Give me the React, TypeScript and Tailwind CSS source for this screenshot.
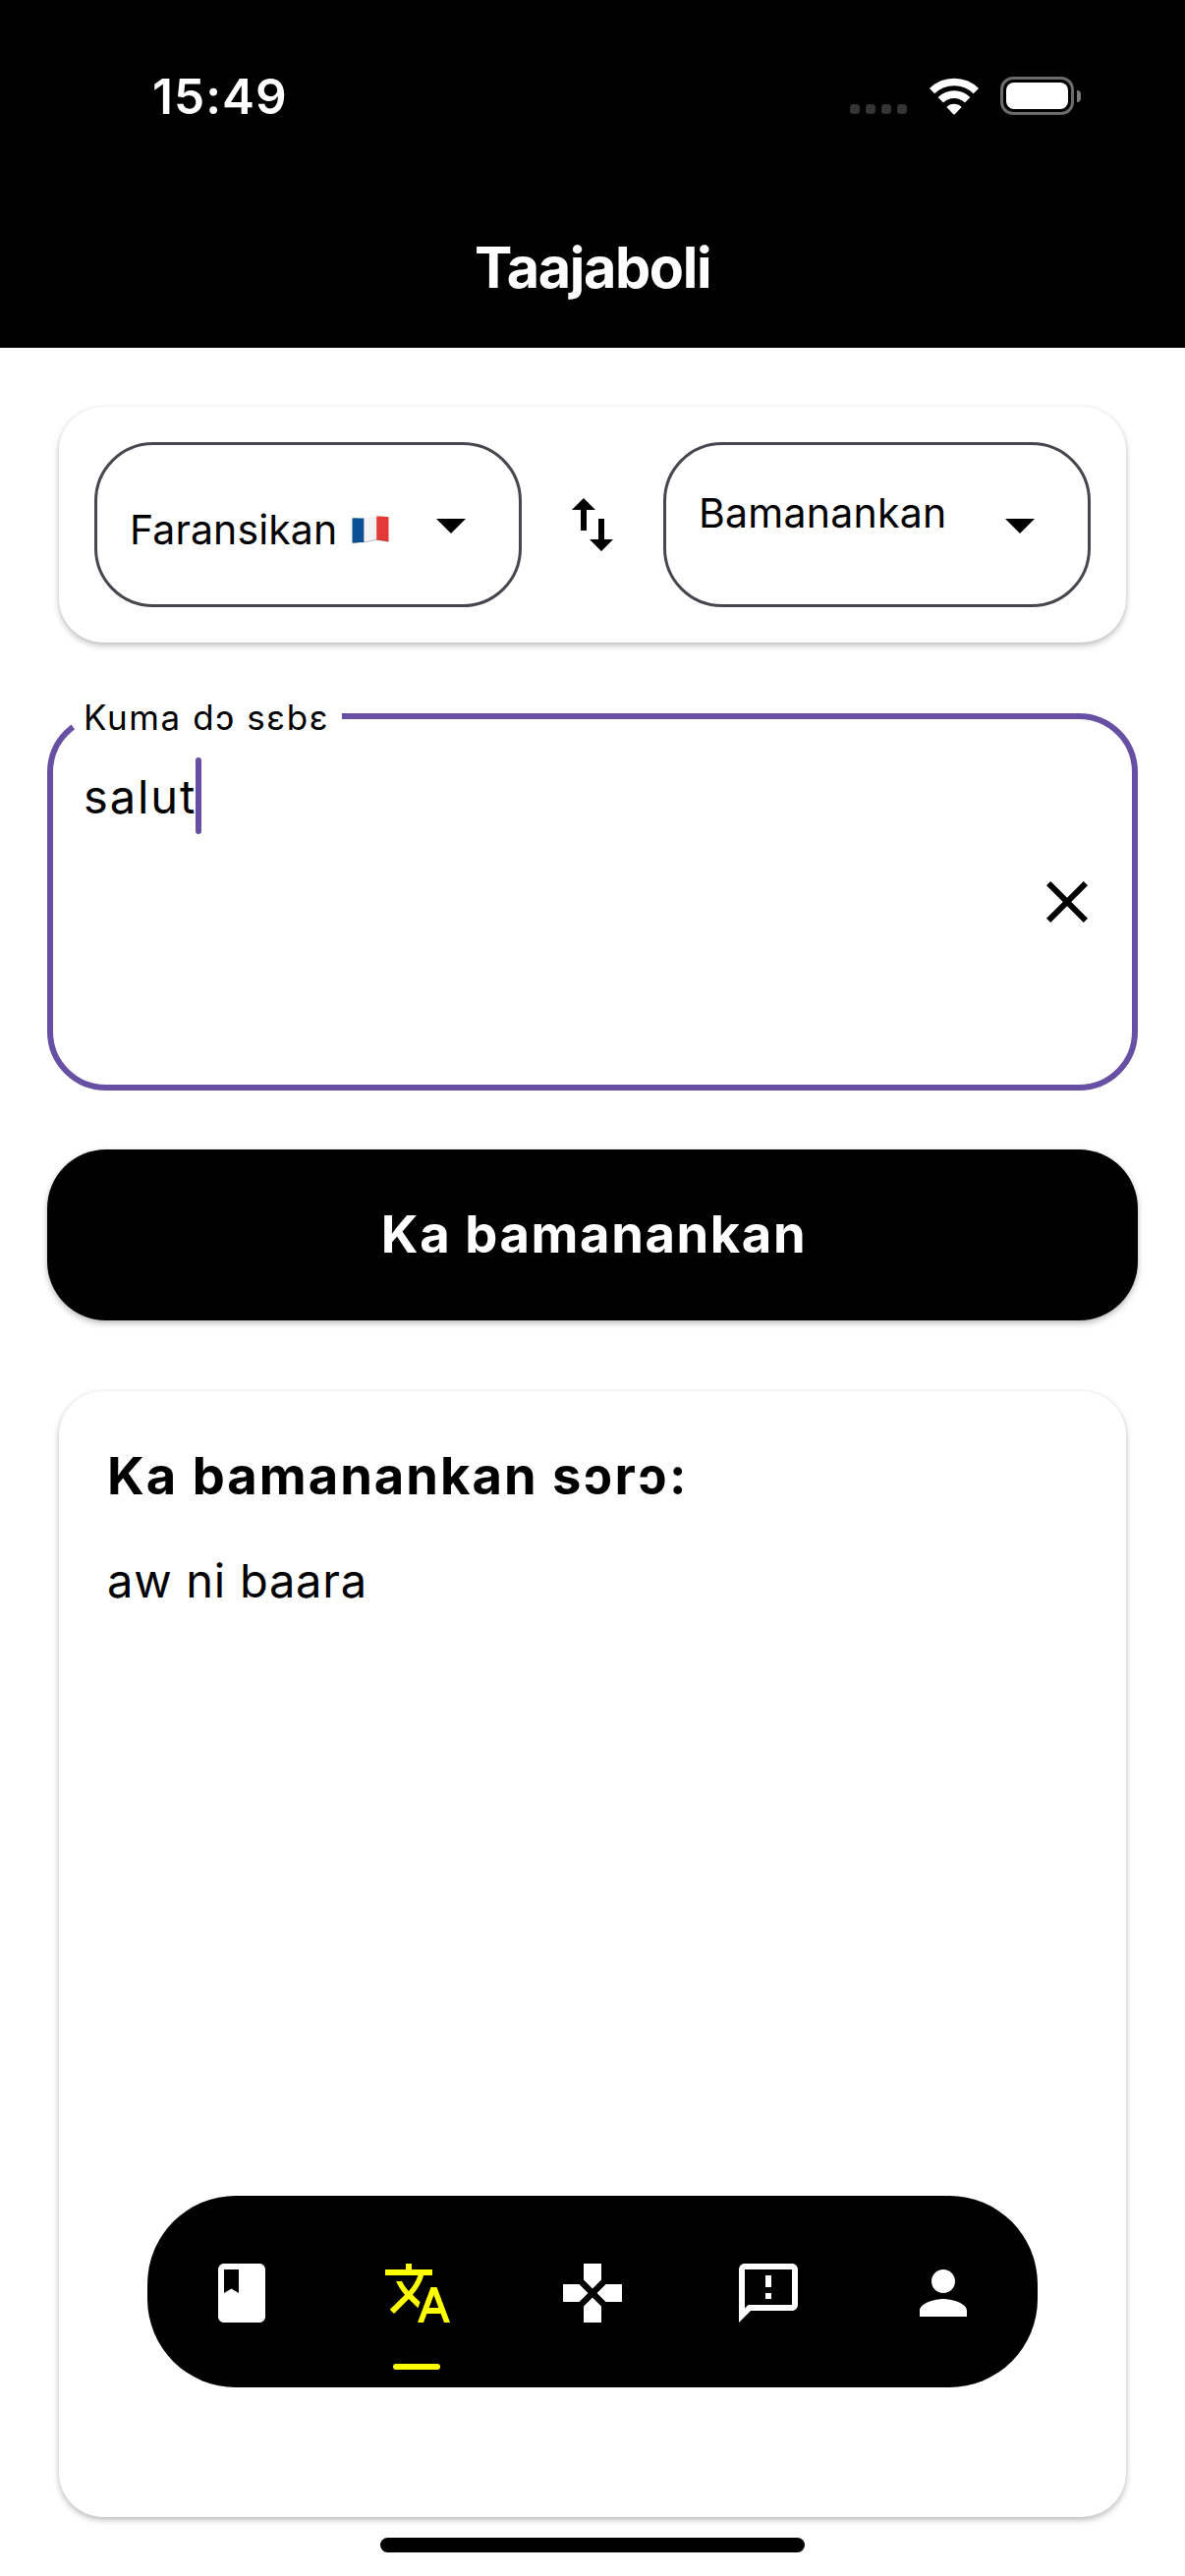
import type { ReactNode } from 'react';

function Icon({ d, className }: { d: string; className?: string }) {
  return (
    <svg viewBox="0 0 24 24" fill="currentColor" className={`size-[72px] shrink-0 ${className ?? ''}`} aria-hidden="true">
      <path d={d} />
    </svg>
  );
}

const icons = {
  dropDown: 'M7 10l5 5 5-5z',
  swap: 'M16 17.01V10h-2v7.01h-3L15 21l4-3.99h-3zM9 3L5 6.99h3V14h2V6.99h3L9 3z',
  close: 'M19 6.41L17.59 5 12 10.59 6.41 5 5 6.41 10.59 12 5 17.59 6.41 19 12 13.41 17.59 19 19 17.59 13.41 12z',
  book: 'M18 2H6c-1.1 0-2 .9-2 2v16c0 1.1.9 2 2 2h12c1.1 0 2-.9 2-2V4c0-1.1-.9-2-2-2zM6 4h5v8l-2.5-1.5L6 12V4z',
  translate:
    'M12.87 15.07l-2.54-2.51.03-.03c1.74-1.94 2.98-4.17 3.71-6.53H17V4h-7V2H8v2H1v1.99h11.17C11.5 7.92 10.44 9.75 9 11.35 8.07 10.32 7.3 9.19 6.69 8h-2c.73 1.63 1.73 3.17 2.98 4.56l-5.09 5.02L4 19l5-5 3.11 3.11.76-2.04zM18.5 10h-2L12 22h2l1.12-3h4.75L21 22h2l-4.5-12zm-2.62 7l1.62-4.33L19.12 17h-3.24z',
  gamepad: 'M15 7.5V2H9v5.5l3 3 3-3zM7.5 9H2v6h5.5l3-3-3-3zM9 16.5V22h6v-5.5l-3-3-3 3zM16.5 9l-3 3 3 3H22V9h-5.5z',
  feedback:
    'M20 2H4c-1.1 0-1.99.9-1.99 2L2 22l4-4h14c1.1 0 2-.9 2-2V4c0-1.1-.9-2-2-2zm0 14H5.17l-.59.59-.58.58V4h16v12zm-9-4h2v2h-2zm0-6h2v4h-2z',
  person: 'M12 12c2.21 0 4-1.79 4-4s-1.79-4-4-4-4 1.79-4 4 1.79 4 4 4zm0 2c-2.67 0-8 1.34-8 4v2h16v-2c0-2.66-5.33-4-8-4z',
};

function StatusBar() {
  return (
    <div className="flex h-[196px] items-center justify-between pr-[106px] pl-[155px]">
      <span className="text-[49.5px] leading-[60px] font-semibold tracking-[1.05px]">15:49</span>
      <div className="flex items-center">
        <div className="mt-[26px] mr-[22px] flex gap-1.5">
          {[0, 1, 2, 3].map((i) => (
            <i key={i} className="size-2.5 rounded-[3.5px] bg-[#343434]" />
          ))}
        </div>
        <svg viewBox="0 0 52 38" className="mr-[21px] -mt-px h-[38px] w-[52px]" fill="none" aria-hidden="true">
          <path d="M3.6 13.6A32 32 0 0 1 48.4 13.6" stroke="#fff" strokeWidth="7.6" />
          <path d="M12.3 22.8A19.3 19.3 0 0 1 39.7 22.8" stroke="#fff" strokeWidth="7.6" />
          <path d="M18.4 29.9A10.8 10.8 0 0 1 33.6 29.9L26.8 37.2Q26 38 25.2 37.2Z" fill="#fff" />
        </svg>
        <div className="-mt-px flex h-[39px] w-[75px] rounded-[13px] border-[3px] border-[#6b6b6b] p-[3px]">
          <div className="flex-1 rounded-[8px] bg-white" />
        </div>
        <div className="ml-[3px] h-3 w-1 rounded-r-full bg-[#7b7b7b]" />
      </div>
    </div>
  );
}

function Select({ className, children }: { className: string; children: ReactNode }) {
  return (
    <button className={`flex h-[168px] w-[435px] items-center justify-between rounded-[60px] border-[3px] border-[#49454f] px-[33px] text-[41px] leading-[50px] ${className}`}>
      {children}
      <Icon d={icons.dropDown} />
    </button>
  );
}

function FrenchFlag() {
  return (
    <svg viewBox="0 0 38 28" className="ml-[15px] h-7 w-[38px]" aria-hidden="true">
      <path d="M.5 2.6C4 1.6 8 2.6 12.6 2.6V27C8 26.6 4 27.8.5 27.6Z" fill="#0b4f94" />
      <path d="M12.6 2.6C17 2.6 21 1 25.2.6V24.6C21 25 17 26.8 12.6 27Z" fill="#f4f4f5" />
      <path d="M25.2.6C29 .2 33.5 1.2 37.5 1.2V26.2C33.5 26.4 29 24.6 25.2 24.6Z" fill="#e23b37" />
      <path d="M.5 27.4C4 27.6 8 26.4 12.6 26.8C17 26.6 21 24.8 25.2 24.4C29 24.4 33.5 26.2 37.5 26" fill="none" stroke="#000" strokeOpacity=".25" />
    </svg>
  );
}

const tabs = [
  { d: icons.book, active: false },
  { d: icons.translate, active: true },
  { d: icons.gamepad, active: false },
  { d: icons.feedback, active: false },
  { d: icons.person, active: false },
];

const raised = 'shadow-[0_3px_6px_rgba(0,0,0,0.26),0_0_4px_rgba(0,0,0,0.04)]';

export default function App() {
  return (
    <div className="flex h-[2622px] w-[1206px] flex-col overflow-hidden bg-white font-['Inter',sans-serif] text-black">
      <header className="h-[354px] bg-black text-white">
        <StatusBar />
        <h1 className="text-center text-[57.5px] leading-[152px] font-bold tracking-[-1.37px]">Taajaboli</h1>
      </header>

      <main className="flex flex-col pt-[60px]">
        <section className={`mx-[60px] flex h-[240px] items-center justify-between rounded-[45px] bg-white px-9 ${raised}`}>
          <Select className="tracking-[0.11px]">
            <span className="flex items-center pt-2.5">
              Faransikan
              <FrenchFlag />
            </span>
          </Select>
          <Icon d={icons.swap} />
          <Select className="tracking-[0.25px]">
            <span className="pb-6">Bamanankan</span>
          </Select>
        </section>

        <section className="relative mx-12 mt-[72px] flex h-[384px] justify-between rounded-[60px] border-[6px] border-[#6750a4]">
          <i className="absolute -top-2 left-2 h-6 w-[286px] bg-white [clip-path:polygon(1px_0,100%_0,100%_100%,18px_100%)]" />
          <span className="absolute -top-[24px] left-[31px] text-[35px] leading-[44px] tracking-[1.6px] whitespace-nowrap">Kuma dɔ sɛbɛ</span>
          <div className="mt-[39px] flex h-[78px] items-center pl-[31px] text-[47px] tracking-[1.9px]">
            <span className="pt-0.5">salut</span>
            <i className="-ml-px h-[78px] w-1.5 rounded-full bg-[#6750a4]" />
          </div>
          <Icon d={icons.close} className="mr-[30px] self-center" />
        </section>

        <button className={`mx-12 mt-[60px] flex h-[174px] items-center justify-center rounded-[60px] bg-black pb-0.5 pl-[3px] text-[52.5px] font-bold tracking-[1.6px] text-white ${raised}`}>
          Ka bamanankan
        </button>

        <section className={`relative mx-[60px] mt-[72px] h-[1146px] rounded-[45px] bg-white px-[49px] pt-[54px] ${raised}`}>
          <h2 className="text-[52.5px] leading-[64px] font-bold tracking-[2px]">Ka bamanankan sɔrɔ:</h2>
          <p className="mt-[45px] text-[47px] leading-[60px] tracking-[0.75px]">aw ni baara</p>

          <nav className="absolute top-[819px] left-[90px] flex h-[195px] w-[906px] items-center justify-between rounded-[90px] bg-black px-[60px] pt-[3px] text-white">
            {tabs.map(({ d, active }, i) => (
              <button key={i} className={active ? 'relative text-[#ffff00]' : 'relative'}>
                <Icon d={d} />
                {active && <i className="absolute -bottom-[42px] left-[11px] h-1.5 w-12 rounded-full bg-[#ffff00]" />}
              </button>
            ))}
          </nav>
        </section>
      </main>

      <div className="mx-auto mt-[21px] h-[15px] w-[432px] rounded-full bg-black" />
    </div>
  );
}
